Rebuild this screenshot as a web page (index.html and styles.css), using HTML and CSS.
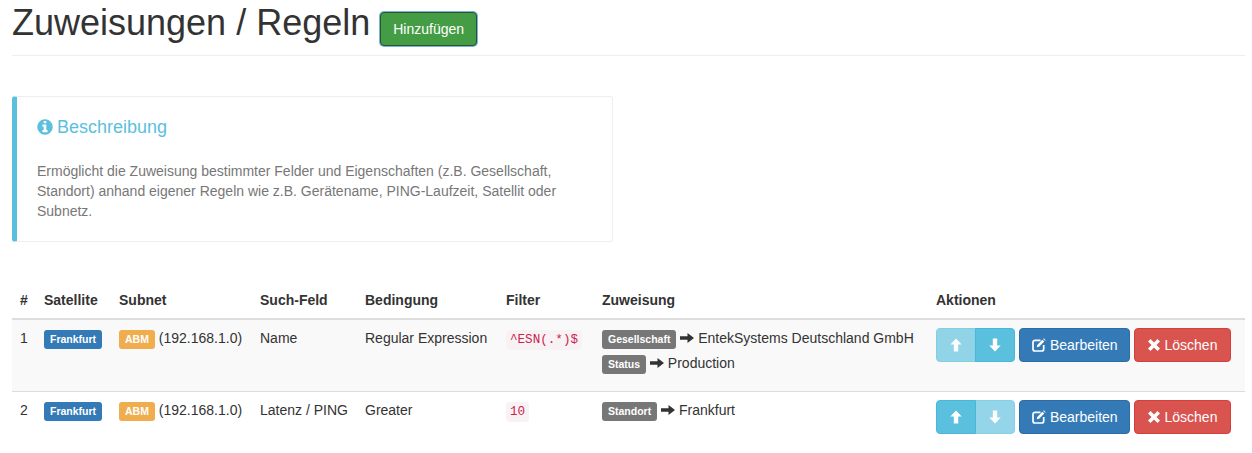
FILE: index.html
```html
<!DOCTYPE html>
<html lang="de">
<head>
<meta charset="utf-8">
<title>Zuweisungen / Regeln</title>
<link rel="stylesheet" href="styles.css">
</head>
<body>
<svg class="sprite" xmlns="http://www.w3.org/2000/svg">
  <symbol id="i-right" viewBox="0 0 14 14"><path d="M0 5.300h7.500V2L14 7l-6.500 5V8.700H0z"/></symbol>
  <symbol id="i-up" viewBox="0 0 14 14"><path d="M7 .5 12.700 6.500H9.200v7H4.800v-7H1.300z"/></symbol>
  <symbol id="i-down" viewBox="0 0 14 14"><path d="M7 13.500 12.700 7.500H9.200v-7H4.800v7H1.300z"/></symbol>
  <symbol id="i-times" viewBox="0 0 14 14"><path d="M1 3.500 3.500 1 7 4.500 10.500 1 13 3.500 9.500 7 13 10.500 10.500 13 7 9.500 3.500 13 1 10.500 4.500 7z"/></symbol>
  <symbol id="i-info" viewBox="0 0 1792 1792"><path d="M1152 1376v-160q0-14-9-23t-23-9h-96v-512q0-14-9-23t-23-9h-320q-14 0-23 9t-9 23v160q0 14 9 23t23 9h96v320h-96q-14 0-23 9t-9 23v160q0 14 9 23t23 9h448q14 0 23-9t9-23zm-128-896v-160q0-14-9-23t-23-9h-192q-14 0-23 9t-9 23v160q0 14 9 23t23 9h192q14 0 23-9t9-23zm640 416q0 209-103 385.500t-279.500 279.500-385.500 103-385.500-103-279.500-279.500-103-385.500 103-385.500 279.500-279.500 385.500-103 385.500 103 279.500 279.500 103 385.500z"/></symbol>
  <symbol id="i-edit" viewBox="0 0 14 14"><path class="edit-box" d="M8.500 2.300H3A2 2 0 0 0 1 4.300V11a2 2 0 0 0 2 2h6.700a2 2 0 0 0 2-2V7"/><path d="M5.200 6.900 10.400 1.700l1.900 1.900-5.200 5.200-2.300.4zM11.200.9l.6-.6 1.900 1.900-.6.6z"/></symbol>
</svg>
<main class="page">
  <header class="page-header">
    <h1 class="title">Zuweisungen / Regeln</h1>
    <button class="btn btn-add" type="button">Hinzufügen</button>
  </header>

  <section class="callout">
    <h4 class="callout-title"><svg class="icon icon-info"><use href="#i-info"/></svg> Beschreibung</h4>
    <p class="callout-text">Ermöglicht die Zuweisung bestimmter Felder und Eigenschaften (z.B. Gesellschaft, Standort) anhand eigener Regeln wie z.B. Gerätename, PING-Laufzeit, Satellit oder Subnetz.</p>
  </section>

  <table class="rules">
    <colgroup>
      <col class="c-num"><col class="c-sat"><col class="c-sub"><col class="c-field"><col class="c-cond"><col class="c-filter"><col class="c-assign"><col class="c-act">
    </colgroup>
    <thead>
      <tr><th>#</th><th>Satellite</th><th>Subnet</th><th>Such-Feld</th><th>Bedingung</th><th>Filter</th><th>Zuweisung</th><th>Aktionen</th></tr>
    </thead>
    <tbody>
      <tr class="striped">
        <td>1</td>
        <td><span class="label label-blue">Frankfurt</span></td>
        <td><span class="label label-orange">ABM</span> (192.168.1.0)</td>
        <td>Name</td>
        <td>Regular Expression</td>
        <td><code class="code">^ESN(.*)$</code></td>
        <td>
          <div class="assign"><span class="label label-grey">Gesellschaft</span> <svg class="icon icon-arrow"><use href="#i-right"/></svg> EntekSystems Deutschland GmbH</div>
          <div class="assign"><span class="label label-grey">Status</span> <svg class="icon icon-arrow"><use href="#i-right"/></svg> Production</div>
        </td>
        <td>
          <div class="actions">
            <div class="btn-group">
              <button class="btn btn-info is-disabled" type="button"><svg class="icon"><use href="#i-up"/></svg></button>
              <button class="btn btn-info" type="button"><svg class="icon"><use href="#i-down"/></svg></button>
            </div>
            <button class="btn btn-primary" type="button"><svg class="icon"><use href="#i-edit"/></svg> Bearbeiten</button>
            <button class="btn btn-danger" type="button"><svg class="icon"><use href="#i-times"/></svg> Löschen</button>
          </div>
        </td>
      </tr>
      <tr>
        <td>2</td>
        <td><span class="label label-blue">Frankfurt</span></td>
        <td><span class="label label-orange">ABM</span> (192.168.1.0)</td>
        <td>Latenz / PING</td>
        <td>Greater</td>
        <td><code class="code">10</code></td>
        <td>
          <div class="assign"><span class="label label-grey">Standort</span> <svg class="icon icon-arrow"><use href="#i-right"/></svg> Frankfurt</div>
        </td>
        <td>
          <div class="actions">
            <div class="btn-group">
              <button class="btn btn-info" type="button"><svg class="icon"><use href="#i-up"/></svg></button>
              <button class="btn btn-info is-disabled" type="button"><svg class="icon"><use href="#i-down"/></svg></button>
            </div>
            <button class="btn btn-primary" type="button"><svg class="icon"><use href="#i-edit"/></svg> Bearbeiten</button>
            <button class="btn btn-danger" type="button"><svg class="icon"><use href="#i-times"/></svg> Löschen</button>
          </div>
        </td>
      </tr>
    </tbody>
  </table>
</main>
</body>
</html>
```
FILE: styles.css
```css
* { box-sizing: border-box; }
html, body { margin: 0; padding: 0; background: #fff; }
body {
  font-family: "Liberation Sans", Arial, sans-serif;
  font-size: 14px;
  line-height: 20px;
  color: #333;
}
.sprite { display: none; }
.page { padding: 0 7px 0 12px; }

.icon { display: inline-block; width: 14px; height: 14px; fill: currentColor; vertical-align: -2px; }
.edit-box { fill: none; stroke: currentColor; stroke-width: 1.7; }

.page-header {
  display: flex;
  align-items: flex-start;
  gap: 10px;
  height: 56px;
  border-bottom: 1px solid #eee;
}
.title { margin: 0; font-size: 36px; font-weight: 500; line-height: 46px; }

.btn {
  display: inline-block;
  height: 34px;
  padding: 6px 12px;
  font-family: "Liberation Sans", Arial, sans-serif;
  font-size: 14px;
  line-height: 20px;
  color: #fff;
  border: 1px solid transparent;
  border-radius: 4px;
  white-space: nowrap;
}
.btn-add {
  margin-top: 12px;
  background: #449d44;
  border-color: #255625;
  box-shadow: 0 0 0 1px #7fb0ea;
}
.btn-primary { padding-right: 11px; background: #337ab7; border-color: #2e6da4; }
.btn-danger { padding-right: 13px; background: #d9534f; border-color: #d43f3a; }
.btn-info { width: 40px; padding: 6px 0; background: #5bc0de; border-color: #46b8da; }
.btn-info.is-disabled { opacity: .65; }

.callout {
  width: 601px;
  height: 146px;
  margin-top: 40px;
  padding: 20px;
  border: 1px solid #eee;
  border-left: 5px solid #5bc0de;
  border-radius: 3px;
}
.callout-title { margin: 0; font-size: 18px; font-weight: 500; line-height: 20px; color: #5bc0de; }
.icon-info { width: 18px; height: 18px; margin: 0 -1.5px; vertical-align: -3px; }
.callout-text { margin: 24px 0 0; color: #777; }

.rules {
  width: 1233px;
  margin-top: 40px;
  border-collapse: separate;
  border-spacing: 0;
  table-layout: fixed;
}
.c-num { width: 24px; }
.c-sat { width: 75px; }
.c-sub { width: 141px; }
.c-field { width: 105px; }
.c-cond { width: 141px; }
.c-filter { width: 96px; }
.c-assign { width: 334px; }
.c-act { width: 317px; }

.rules th, .rules td { padding: 8px; text-align: left; vertical-align: top; }
.rules th { font-weight: 700; border-bottom: 2px solid #ddd; }
.rules tr + tr td { border-top: 1px solid #ddd; }
.striped { background: #f9f9f9; }

.label {
  display: inline-block;
  padding: 2px 6px 3px;
  font-size: 10.5px;
  font-weight: 700;
  line-height: 14px;
  color: #fff;
  vertical-align: baseline;
  border-radius: 3px;
}
.label-blue { background: #337ab7; }
.label-orange { background: #f0ad4e; }
.label-grey { background: #777; }

.code {
  display: inline-block;
  padding: 2px 4px;
  font-family: "Liberation Mono", "Courier New", monospace;
  font-size: 12.6px;
  line-height: 16px;
  color: #c7254e;
  background: #f9f2f4;
  border-radius: 4px;
}

.assign { height: 25px; }
.assign:last-child { height: 30px; }
.icon-arrow { vertical-align: -2px; }

.actions { display: flex; gap: 4px; }
.btn-group { display: flex; }
.btn-group .btn:first-child { border-radius: 4px 0 0 4px; }
.btn-group .btn:last-child { border-radius: 0 4px 4px 0; margin-left: -1px; }
```
